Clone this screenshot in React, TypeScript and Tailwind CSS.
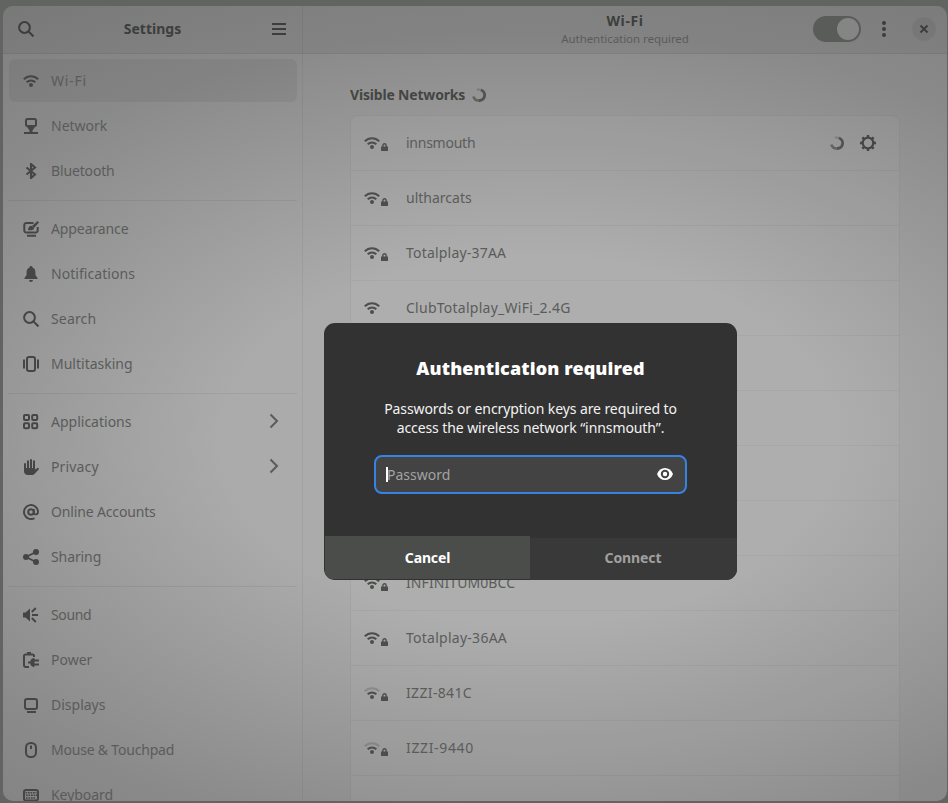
import React from "react";

type P = { children?: React.ReactNode; className?: string };

const Svg = ({ children, className = "" }: P) => (
  <svg
    viewBox="0 0 16 16"
    className={`size-4 shrink-0 ${className}`}
    fill="none"
    stroke="currentColor"
    strokeWidth="2"
  >
    {children}
  </svg>
);

const WifiShape = ({ weak = false }: { weak?: boolean }) => (
  <>
    <path d="M.8 6.3C4.8 2.2 11.2 2.2 15.2 6.3" opacity={weak ? 0.3 : 1} />
    <path d="M3.7 9.2C6.1 6.8 9.9 6.8 12.3 9.2" />
    <circle cx="8" cy="12" r="2" fill="currentColor" stroke="none" />
  </>
);

const icons: Record<string, React.ReactNode> = {
  wifi: <WifiShape />,
  network: (
    <>
      <rect x="3" y="1" width="10" height="7" rx="1.500" />
      <path d="M4 9h8L9.500 12.500v1.500h-3v-1.500z" fill="currentColor" stroke="none" />
      <path d="M1 15h14" />
    </>
  ),
  bluetooth: <path d="M3.5 4.5 12 11.5 8 15V1l4 3.500-8.500 7" strokeWidth="2.100" />,
  appearance: (
    <>
      <path d="M10.500 2H3.500A2 2 0 0 0 1.300 4v5.500a2 2 0 0 0 2.200 2h9a2 2 0 0 0 2.200-2V6" />
      <path d="M5 9.300c.2-3 1.200-4.500 3.500-4.500L11 7.300c0 1.800-2 2.200-6 2zM9 5l5.500-5L16 1.500 11 7z" fill="currentColor" stroke="none" />
      <path d="M4 14.800h9" />
    </>
  ),
  bell: (
    <path
      d="M8 0a1.500 1.500 0 0 0-1.500 1.600C4.500 2.300 3.600 4 3.600 6v3L1.500 12v1h13v-1l-2.100-3V6c0-2-.9-3.700-2.900-4.400A1.500 1.500 0 0 0 8 0zM6 14c.2 1.300 1 2 2 2s1.800-.7 2-2z"
      fill="currentColor"
      stroke="none"
    />
  ),
  search: (
    <>
      <circle cx="6.500" cy="6.500" r="5.400" />
      <path d="m10.500 10.500 5 5" />
    </>
  ),
  multi: (
    <>
      <rect x="4" y="1" width="8" height="14" rx="2" />
      <path d="M1 3.500v9M15 3.500v9" />
    </>
  ),
  apps: (
    <>
      <rect x="1" y="1" width="5" height="5" rx="1" />
      <rect x="9.200" y="1" width="5" height="5" rx="1" />
      <rect x="1" y="9.200" width="5" height="5" rx="1" />
      <rect x="9.200" y="9.200" width="5" height="5" rx="1" />
    </>
  ),
  hand: (
    <>
      <path d="M2 5v6M5 2.200V10M8 1v9M11 2.200V10" strokeLinecap="round" />
      <path d="M1 9h11v1.500l3-1.800c1 .3 1.200 1.200.6 1.900L12 14.500c-1 1-2 1.500-3.500 1.500H5c-2.500 0-4-1.500-4-4z" fill="currentColor" stroke="none" />
    </>
  ),
  at: (
    <>
      <circle cx="8" cy="8" r="2.800" />
      <path d="M10.800 5v3.800c0 2.200 4.200 2.200 4.200-.8a7 7 0 1 0-3.500 6.100" strokeWidth="1.900" />
    </>
  ),
  share: (
    <>
      <path d="m13 3-10 5 10 5" strokeWidth="1.800" />
      <g fill="currentColor" stroke="none">
        <circle cx="13" cy="3" r="3" />
        <circle cx="3" cy="8" r="3" />
        <circle cx="13" cy="13" r="3" />
      </g>
    </>
  ),
  sound: (
    <>
      <path d="M0 5.500h2.500L7 1.500v13l-4.500-4H0z" fill="currentColor" stroke="none" />
      <path d="M9 8h6M8.800 5l4-4M8.800 11l4 4" strokeWidth="1.900" />
    </>
  ),
  power: (
    <>
      <path d="M6 15H3a2 2 0 0 1-2-2V4a1.500 1.500 0 0 1 1.500-1.500h7A1.500 1.500 0 0 1 11 4v1" />
      <path d="M4 0h4v3H4zM11.500 6v9C9 15 7.500 13.500 7.300 11.500H5v-2h2.300C7.500 7.500 9 6 11.500 6z" fill="currentColor" stroke="none" />
      <path d="M11 8.500h5M11 12.500h5" strokeWidth="1.800" />
    </>
  ),
  display: (
    <>
      <rect x="2" y="2" width="12" height="10" rx="2" />
      <path d="M4 15h9" />
    </>
  ),
  mouse: (
    <>
      <rect x="3" y="1" width="10" height="14" rx="4.500" />
      <path d="M8 3.500V7" />
    </>
  ),
  keyboard: (
    <>
      <rect x="1" y="3" width="14" height="10.500" rx="2" />
      <path d="M2.500 5.800h11M3 8.300h11M3 10.900h10" strokeWidth="1.500" strokeDasharray="1.700 .8" />
    </>
  ),
};

const groups: { icon: string; label: string; arrow?: boolean; track?: string }[][] = [
  [
    { icon: "wifi", label: "Wi-Fi", track: "tracking-[0.8px]" },
    { icon: "network", label: "Network" },
    { icon: "bluetooth", label: "Bluetooth", track: "tracking-[-0.15px]" },
  ],
  [
    { icon: "appearance", label: "Appearance", track: "tracking-[-0.1px]" },
    { icon: "bell", label: "Notifications", track: "tracking-[0.05px]" },
    { icon: "search", label: "Search", track: "tracking-[0.15px]" },
    { icon: "multi", label: "Multitasking" },
  ],
  [
    { icon: "apps", label: "Applications", arrow: true },
    { icon: "hand", label: "Privacy", arrow: true, track: "tracking-[0.15px]" },
    { icon: "at", label: "Online Accounts", track: "tracking-[-0.15px]" },
    { icon: "share", label: "Sharing", track: "tracking-[-0.1px]" },
  ],
  [
    { icon: "sound", label: "Sound", track: "tracking-[-0.35px]" },
    { icon: "power", label: "Power" },
    { icon: "display", label: "Displays" },
    { icon: "mouse", label: "Mouse & Touchpad", track: "tracking-[-0.2px]" },
    { icon: "keyboard", label: "Keyboard", track: "tracking-[-0.05px]" },
  ],
];

const networks: { name: string; track?: string; open?: boolean; weak?: boolean; busy?: boolean }[] = [
  { name: "innsmouth", busy: true, track: "tracking-[-0.25px]" },
  { name: "ultharcats" },
  { name: "Totalplay-37AA", track: "tracking-[0.2px]" },
  { name: "ClubTotalplay_WiFi_2.4G", open: true, track: "tracking-[0.26px]" },
  { name: "" },
  { name: "" },
  { name: "" },
  { name: "" },
  { name: "INFINITUM0BCC", track: "tracking-[0.08px]" },
  { name: "Totalplay-36AA", track: "tracking-[0.26px]" },
  { name: "IZZI-841C", weak: true, track: "tracking-[0.35px]" },
  { name: "IZZI-9440", weak: true, track: "tracking-[0.65px]" },
  { name: "" },
];

const Spinner = () => (
  <Svg>
    <path d="M2.400 9.500a5.500 5.500 0 0 0 5.600 4" opacity=".65" strokeWidth="2.600" />
    <path d="M8 13.500A5.400 5.400 0 0 0 10 3" strokeWidth="2.800" opacity=".85" />
    <path d="M10 3a5.500 5.500 0 0 0-4-.2" opacity=".3" />
  </Svg>
);

const Gear = () => (
  <Svg>
    <circle cx="8" cy="8" r="5.300" strokeWidth="2.200" />
    <path
      d="M8 0v3M8 13v3M0 8h3M13 8h3M2.340 2.340l2.100 2.100M11.560 11.560l2.100 2.100M13.660 2.340l-2.100 2.100M4.440 11.560l-2.100 2.100"
      strokeWidth="2.400"
    />
  </Svg>
);

const NetworkIcon = ({ open, weak }: { open?: boolean; weak?: boolean }) => (
  <div className="flex w-6 shrink-0 items-end text-[#4c4e4c]">
    <Svg>
      <WifiShape weak={weak} />
    </Svg>
    {!open && (
      <svg viewBox="0 0 7 8" className="ml-[0.5px] h-2 w-[7px]" fill="none" stroke="currentColor">
        <path d="M1.900 4V2.300a1.600 1.600 0 0 1 3.200 0V4" strokeWidth="1.400" />
        <path d="M0 3.500h7V8H0z" fill="currentColor" stroke="none" />
      </svg>
    )}
  </div>
);

export default function App() {
  return (
    <div className="relative h-[803px] w-[948px] overflow-hidden bg-[#626462] pt-[6px] pr-px pb-[2px] pl-[3px] font-['Noto_Sans','Open_Sans',sans-serif] text-[14px] text-[#5a5c5a]">
      <div className="flex h-[795px] flex-col overflow-hidden rounded-[10px] bg-[radial-gradient(ellipse_800px_480px_at_527px_434px,#ababab_38%,#8a8a8a_86%,#7c7c7c_120%)]">
        <header className="flex h-[48px] shrink-0 border-b border-black/5 bg-black/5 text-[#3c3e3c]">
          <div className="flex w-[300px] items-center border-r border-black/5 pr-[15px] pb-[2px] pl-[15px]">
            <Svg>{icons.search}</Svg>
            <span className="flex-1 text-center text-[14px] font-bold">Settings</span>
            <Svg>
              <path d="M1 3h14M1 8h14M1 13h14" />
            </Svg>
          </div>
          <div className="flex flex-1 items-center">
            <div className="w-[134px]" />
            <div className="flex flex-1 flex-col items-center">
              <span className="text-[14px] leading-[18px] font-bold tracking-[0.6px]">Wi-Fi</span>
              <span className="text-[11.5px] leading-[18px] tracking-[-0.05px] text-[#5a5c5a]">Authentication required</span>
            </div>
            <div className="flex w-[134px] shrink-0 items-center pb-[2px]">
              <div className="flex h-[26px] w-[48px] items-center justify-end rounded-full bg-[#5a5c5a] p-[2px]">
                <div className="size-[22px] rounded-full bg-[#858585]" />
              </div>
              <Svg className="ml-[15px]">
                <g fill="currentColor" stroke="none">
                  <circle cx="8" cy="2" r="2" />
                  <circle cx="8" cy="8" r="2" />
                  <circle cx="8" cy="14" r="2" />
                </g>
              </Svg>
              <div className="ml-5 flex size-6 items-center justify-center rounded-full bg-black/5">
                <Svg>
                  <path d="m4.500 4.500 7 7m0-7-7 7" />
                </Svg>
              </div>
            </div>
          </div>
        </header>
        <div className="flex min-h-0 flex-1">
          <nav className="h-full w-[300px] shrink-0 overflow-hidden border-r border-black/5 pt-[4px]">
            {groups.map((g, gi) => (
              <div key={gi}>
                {gi > 0 && (
                  <div className="flex h-[13px] items-center pt-px">
                    <div className="mx-[5px] h-px flex-1 bg-black/6" />
                  </div>
                )}
                {g.map(({ icon, label, arrow, track = "" }) => (
                  <div key={label} className="flex h-[45px] items-center pr-[5px] pl-[6px]">
                    <div
                      className={`flex h-[43px] flex-1 items-center rounded-[6px] pr-[15px] pl-[14px] ${icon === "wifi" ? "bg-black/5" : ""}`}
                    >
                      <Svg className="text-[#444644]">{icons[icon]}</Svg>
                      <span className={`ml-3 flex-1 ${track}`}>{label}</span>
                      {arrow && (
                        <Svg className="-mt-px">
                          <path d="m4.500 1.500 6.500 6.500-6.500 6.500" />
                        </Svg>
                      )}
                    </div>
                  </div>
                ))}
              </div>
            ))}
          </nav>
          <main className="flex h-full flex-1 flex-col overflow-hidden pr-12 pl-[47px]">
            <div className="flex h-[61px] shrink-0 items-center pt-[20px] text-[#444644]">
              <span className="text-[14px] font-bold tracking-[-0.18px]">Visible Networks</span>
              <div className="ml-[6px]">
                <Spinner />
              </div>
            </div>
            <div className="w-[550px] rounded-t-[8px] border border-black/5 bg-white/4">
              {networks.map((n, i) => (
                <div key={i} className="flex h-[55px] shrink-0 items-center border-b border-black/4 pr-[23px] pb-px pl-[13px]">
                  {n.name && <NetworkIcon open={n.open} weak={n.weak} />}
                  <span className={`ml-[18px] flex-1 ${n.track ?? ""}`}>{n.name}</span>
                  {n.busy && (
                    <div className="flex gap-[15px] pt-px text-[#444644]">
                      <Spinner />
                      <Gear />
                    </div>
                  )}
                </div>
              ))}
            </div>
          </main>
        </div>
      </div>

      <section className="absolute top-[323px] left-[324px] flex h-[257px] w-[413px] flex-col overflow-hidden rounded-[11px] bg-[#323232] text-center text-white">
        <h1 className="mt-[32px] text-[18px] leading-[26px] font-black tracking-[0.12px]">Authentication required</h1>
        <p className="mt-[18px] text-[14px] leading-[19px] tracking-[-0.09px] text-[#f2f2f2]">
          Passwords or encryption keys are required to
          <br />
          access the wireless network “innsmouth”.
        </p>
        <div className="mx-[50px] mt-[18px] flex h-[39px] shrink-0 items-center rounded-[8px] border-2 border-[#3584e4] bg-[#424342] pr-[12px] pl-[10px]">
          <div className="h-[15px] w-[2px] bg-white" />
          <span className="-ml-px flex-1 text-left text-[14px] text-[#a2a2a2]">Password</span>
          <Svg className="-mt-px">
            <path d="M0 8c1.500-4 4.500-6 8-6s6.500 2 8 6c-1.500 4-4.500 6-8 6s-6.500-2-8-6z" fill="white" stroke="none" />
            <circle cx="8" cy="8" r="3.200" stroke="#424342" />
          </Svg>
        </div>
        <div className="mt-auto flex h-[44px] text-[14px] font-bold">
          <div className="mb-px ml-px flex w-[205px] items-center justify-center bg-[#4b4d4b] tracking-[-0.15px]">Cancel</div>
          <div className="mt-[2px] flex flex-1 items-center justify-center bg-[#383938] pr-px pb-[3px] tracking-[-0.1px] text-[#a0a0a0]">Connect</div>
        </div>
      </section>
    </div>
  );
}
